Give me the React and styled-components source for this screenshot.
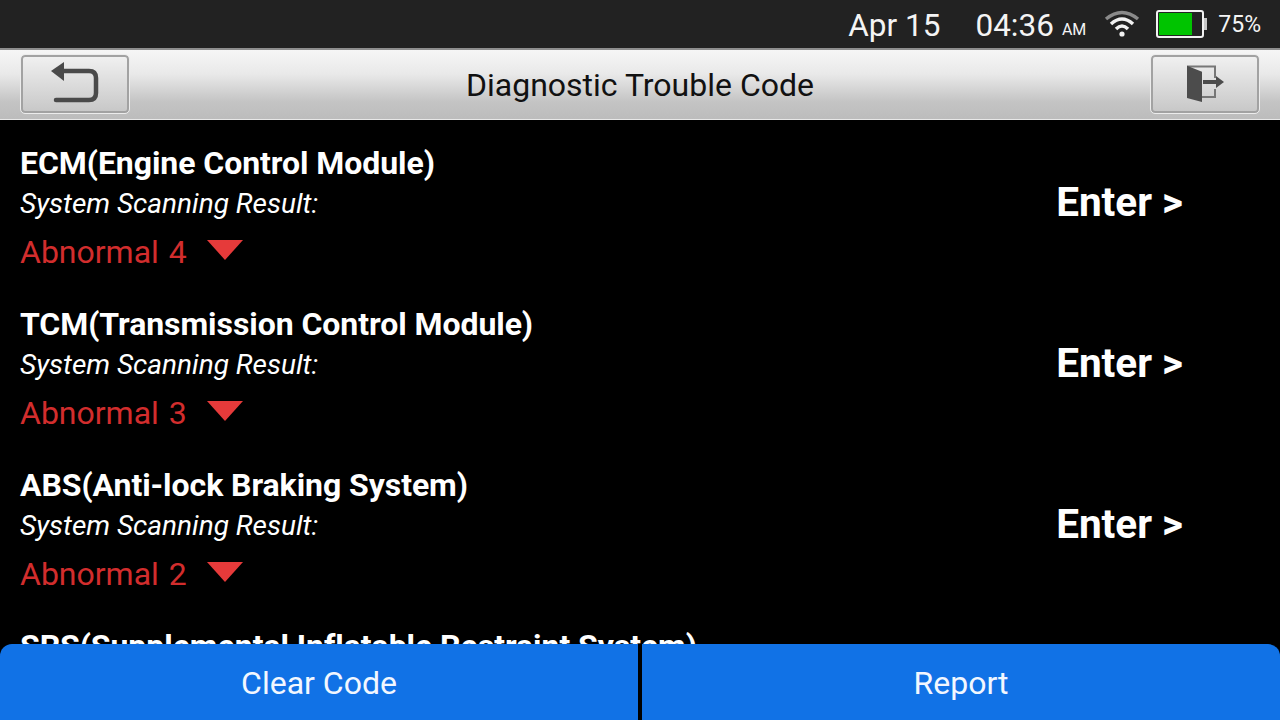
import React from "react";
import styled, { createGlobalStyle } from "styled-components";

const GlobalStyle = createGlobalStyle`
  html, body { margin: 0; padding: 0; background: #000; }
  body { font-family: Roboto, "Liberation Sans", sans-serif; }
`;

const Screen = styled.div`
  width: 1280px;
  height: 720px;
  display: flex;
  flex-direction: column;
  overflow: hidden;
  background: #000;
`;

const StatusBar = styled.div`
  height: 48px;
  flex: none;
  display: flex;
  align-items: center;
  justify-content: flex-end;
  padding-right: 19px;
  background: #222222;
  color: #f4f4f4;
`;

const DateText = styled.span`
  font-size: 31.5px;
  margin: 2px 35px 0 0;
`;

const TimeText = styled.span`
  font-size: 31.5px;
  margin-top: 2px;
`;

const AmPm = styled.span`
  font-size: 16px;
  margin: 10px 18px 0 8px;
`;

const StatusIcon = styled.span`
  display: flex;
  margin-right: ${(p) => p.$gap || 0}px;
`;

const Percent = styled.span`
  font-size: 23px;
  margin-left: 10px;
`;

const TitleBar = styled.div`
  height: 72px;
  flex: none;
  box-sizing: border-box;
  display: flex;
  align-items: center;
  justify-content: space-between;
  padding: 0 21px 2px;
  border-top: 2px solid #8e8e8e;
  border-bottom: 1px solid #e8e8e8;
  background: linear-gradient(#f6f6f6 0%, #e9e9e9 35%, #c4c4c4 75%, #bcbcbc 100%);
`;

const Title = styled.h1`
  margin: 2px 0 0;
  font-size: 32px;
  font-weight: 400;
  color: #111;
`;

const BarButton = styled.button`
  width: 108px;
  height: 58px;
  padding: 0;
  display: flex;
  align-items: center;
  justify-content: center;
  box-sizing: border-box;
  border: 2px solid #a2a2a2;
  outline: 1px solid #ececec;
  border-radius: 4px;
  background: linear-gradient(#f0f0f0, #c8c8c8);
`;

const List = styled.div`
  flex: 1;
  min-height: 0;
  overflow: hidden;
`;

const Row = styled.div`
  height: 161px;
  flex: none;
  box-sizing: border-box;
  display: flex;
  align-items: flex-start;
  justify-content: space-between;
  padding: 22px 97px 0 20px;
`;

const Info = styled.div`
  display: flex;
  flex-direction: column;
`;

const SystemName = styled.div`
  font-size: 32px;
  line-height: 42px;
  font-weight: 700;
  letter-spacing: -0.06px;
  color: #fff;
`;

const ScanLabel = styled.div`
  font-size: 28px;
  line-height: 40px;
  font-style: italic;
  color: #fff;
`;

const Result = styled.div`
  display: flex;
  align-items: center;
  margin-top: 3px;
  height: 50px;
  font-size: 32px;
  word-spacing: 2px;
  color: #d22d2d;
`;

const Caret = styled.span`
  width: 0;
  height: 0;
  margin: -5px 0 0 20px;
  border-left: 18px solid transparent;
  border-right: 18px solid transparent;
  border-top: 20px solid #e63a3a;
`;

const EnterLink = styled.div`
  margin-top: 35px;
  font-size: 40.5px;
  line-height: 50px;
  font-weight: 700;
  color: #fff;
`;

const Footer = styled.div`
  height: 76px;
  flex: none;
  display: flex;
  gap: 4px;
  background: #000;
`;

const FooterButton = styled.button`
  flex: 1;
  padding: 2px 0 0;
  border: 0;
  border-radius: ${(p) => (p.$side === "left" ? "12px 0 0 0" : "0 12px 0 0")};
  background: #1172e6;
  color: #f2f7ff;
  font-family: inherit;
  font-size: 32px;
`;

const BackIcon = () => (
  <svg width="52" height="44" viewBox="0 0 52 44">
    <path d="M15 0 V19 L2 9 Z" fill="#4a4a4a" />
    <path d="M13 9 H40 Q47 9 47 16 V31 Q47 38 40 38 H7" fill="none" stroke="#4a4a4a" strokeWidth="4.5" strokeLinecap="round" />
  </svg>
);

const ExitIcon = () => (
  <svg width="40" height="38" viewBox="0 0 40 38">
    <path d="M2 1.5 H30 V13 M30 24 V32 H17" fill="none" stroke="#777" strokeWidth="2" />
    <path d="M2 0.7 L17 6.7 V37 L2 33 Z" fill="#4c4c4c" />
    <path d="M18 15 H31 V11 L39 17 L31 23 V19 H18 Z" fill="#4c4c4c" />
  </svg>
);

const WifiIcon = () => (
  <svg width="36" height="28" viewBox="0 0 36 28">
    <path d="M2 9 Q18 -4 34 9" fill="none" stroke="#8a8a8a" strokeWidth="3.5" />
    <path d="M7 14 Q18 4 29 14" fill="none" stroke="#f2f2f2" strokeWidth="3.5" />
    <path d="M12 19 Q18 13 24 19" fill="none" stroke="#f2f2f2" strokeWidth="3.5" />
    <circle cx="18" cy="24" r="2.6" fill="#f2f2f2" />
  </svg>
);

const BatteryIcon = () => (
  <svg width="52" height="28" viewBox="0 0 52 28">
    <rect x="1" y="1" width="46" height="26" rx="2" fill="#222" stroke="#f2f2f2" strokeWidth="2" />
    <rect x="3" y="3" width="33" height="22" fill="#00c400" />
    <rect x="48" y="8" width="3" height="12" fill="#c8c8c8" />
  </svg>
);

const systems = [
  { name: "ECM(Engine Control Module)", count: 4 },
  { name: "TCM(Transmission Control Module)", count: 3 },
  { name: "ABS(Anti-lock Braking System)", count: 2 },
  { name: "SRS(Supplemental Inflatable Restraint System)", count: 1 },
];

export default function App() {
  return (
    <>
      <GlobalStyle />
      <Screen>
        <StatusBar>
          <DateText>Apr 15</DateText>
          <TimeText>04:36</TimeText>
          <AmPm>AM</AmPm>
          <StatusIcon $gap={16}><WifiIcon /></StatusIcon>
          <StatusIcon><BatteryIcon /></StatusIcon>
          <Percent>75%</Percent>
        </StatusBar>
        <TitleBar>
          <BarButton><BackIcon /></BarButton>
          <Title>Diagnostic Trouble Code</Title>
          <BarButton><ExitIcon /></BarButton>
        </TitleBar>
        <List>
          {systems.map((s) => (
            <Row key={s.name}>
              <Info>
                <SystemName>{s.name}</SystemName>
                <ScanLabel>System Scanning Result:</ScanLabel>
                <Result>
                  Abnormal {s.count}
                  <Caret />
                </Result>
              </Info>
              <EnterLink>Enter &gt;</EnterLink>
            </Row>
          ))}
        </List>
        <Footer>
          <FooterButton $side="left">Clear Code</FooterButton>
          <FooterButton $side="right">Report</FooterButton>
        </Footer>
      </Screen>
    </>
  );
}
